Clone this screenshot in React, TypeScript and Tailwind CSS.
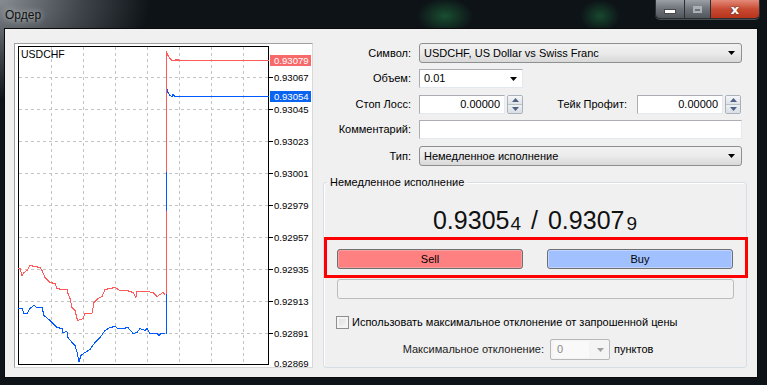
import React from "react";

const redPts: [number, number][] = [
  [18, 268], [20, 268], [22, 275], [24, 272], [27, 270], [30, 265], [35, 266], [40, 267], [42, 270], [45, 277], [50, 282], [55, 283], [57, 288], [62, 289], [67, 289], [68, 293], [70, 298], [72, 307], [75, 310], [77, 318], [78, 320], [83, 318], [85, 313], [92, 313], [94, 302], [98, 298], [102, 296], [105, 289], [110, 288], [115, 287], [120, 290], [127, 290], [133, 292], [136, 297], [137, 291], [147, 291], [153, 292], [157, 296], [160, 294], [163, 292], [165, 294],
];
const bluePts: [number, number][] = [
  [18, 308], [22, 308], [24, 313], [27, 313], [30, 308], [34, 305], [37, 307], [42, 307], [44, 315], [50, 320], [53, 323], [57, 327], [62, 328], [63, 332], [67, 331], [68, 337], [72, 342], [75, 345], [77, 351], [79, 361], [81, 355], [85, 352], [90, 349], [95, 342], [100, 337], [105, 330], [110, 327], [115, 326], [118, 328], [123, 328], [128, 327], [133, 333], [137, 332], [140, 328], [145, 330], [147, 328], [150, 333], [157, 333], [159, 335], [161, 333], [165, 333],
];

const pts = (p: [number, number][]) => p.map(([x, y]) => `${x},${y + 0.5}`).join(" ");

const axis: [string, number][] = [
  ["0.93067", 77], ["0.93045", 109], ["0.93023", 141], ["0.93001", 173], ["0.92979", 205], ["0.92957", 237], ["0.92935", 269], ["0.92913", 301], ["0.92891", 333], ["0.92869", 363],
];

function Chart() {
  const hs = [77, 109, 141, 173, 205, 237, 269, 301, 333];
  const vs = [51, 83, 115, 147, 179, 211, 243];
  const RED = "#ff5a5a";
  const BLUE = "#0058ff";
  const ff = "'Liberation Sans', Arial, sans-serif";
  return (
    <svg width={297} height={323} viewBox="15 44 297 323" shapeRendering="crispEdges">
      <rect x={15} y={44} width={297} height={323} fill="#ffffff" />
      {hs.map((y) => (
        <line key={"h" + y} x1={19} x2={269} y1={y + 0.5} y2={y + 0.5} stroke="#c4c4c4" strokeDasharray="3 3" />
      ))}
      {vs.map((x) => (
        <line key={"v" + x} x1={x + 0.5} x2={x + 0.5} y1={47} y2={365} stroke="#c4c4c4" strokeDasharray="3 3" />
      ))}
      <rect x={18.5} y={46.5} width={250} height={318} fill="none" stroke="#000" />
      {hs.map((y) => (
        <line key={"t" + y} x1={269} x2={273} y1={y + 0.5} y2={y + 0.5} stroke="#000" />
      ))}
      <polyline points={pts(bluePts)} fill="none" stroke={BLUE} />
      <polyline points={pts(redPts)} fill="none" stroke={RED} />
      <line x1={166.5} x2={166.5} y1={51} y2={295} stroke={RED} />
      <line x1={166.5} x2={166.5} y1={294} y2={334} stroke={BLUE} />
      <line x1={166.5} x2={166.5} y1={172} y2={211} stroke={BLUE} />
      <polyline points="166,51.5 168,55.5 170,58.5 172,60.5 175,60.5 176,59.5 177,60.5 178,59.5 179,60.5 269,60.5" fill="none" stroke={RED} />
      <polyline points="167,89.5 168,92.5 170,95.5 172,96.5 173,94.5 175,96.5 176,96.5 269,96.5" fill="none" stroke={BLUE} />
      <text x={21} y={58} fontSize={10.5} fontFamily={ff} fill="#000">USDCHF</text>
      {axis.map(([t, y]) => (
        <text key={t} x={274} y={y + 3.5} fontSize={9.6} fontFamily={ff} fill="#000">{t}</text>
      ))}
      <rect x={270} y={55} width={41} height={11} fill="#f86a6a" />
      <text x={274} y={63.5} fontSize={9.6} fontFamily={ff} fill="#fff">0.93079</text>
      <rect x={270} y={91} width={41} height={11} fill="#0a64f0" />
      <text x={274} y={99.5} fontSize={9.6} fontFamily={ff} fill="#fff">0.93054</text>
    </svg>
  );
}

function Arrow({ color = "#000" }: { color?: string }) {
  return (
    <svg width="8" height="4" viewBox="0 0 8 4">
      <polygon points="0,0 7,0 3.5,4" fill={color} />
    </svg>
  );
}

function Spinner() {
  return (
    <div className="flex flex-col w-[16px] h-[19px] ml-[2px] border border-[#a9b1bb] rounded-[2px] overflow-hidden">
      <div className="flex-1 flex items-center justify-center bg-gradient-to-b from-[#f4f6f8] to-[#dfe3e8] border-b border-[#b8c0c8]">
        <svg width="7" height="4" viewBox="0 0 7 4"><polygon points="0,4 7,4 3.5,0" fill="#4d6185" /></svg>
      </div>
      <div className="flex-1 flex items-center justify-center bg-gradient-to-b from-[#eef1f4] to-[#d9dee4]">
        <svg width="7" height="4" viewBox="0 0 7 4"><polygon points="0,0 7,0 3.5,4" fill="#4d6185" /></svg>
      </div>
    </div>
  );
}

function Label({ children }: { children: React.ReactNode }) {
  return <div className="w-[96px] pr-[8px] text-right shrink-0">{children}</div>;
}

export default function App() {
  return (
    <div
      className="w-[767px] h-[385px] overflow-hidden relative flex flex-col text-[11px] text-black bg-[radial-gradient(ellipse_150px_100px_at_0%_0%,#868c91_0%,#3e4449_55%,#0d1317_100%)]"
      style={{ fontFamily: "'Liberation Sans', Arial, sans-serif" }}
    >
      {/* title bar */}
      <div className="h-[29px] flex justify-between shrink-0 bg-[radial-gradient(ellipse_28px_18px_at_445px_16px,rgba(40,150,80,0.45),transparent),radial-gradient(ellipse_20px_16px_at_600px_16px,rgba(40,150,80,0.4),transparent)]">
        <div className="pl-[5px] pt-[6px] text-[12px] text-[#111] [text-shadow:0_0_6px_rgba(255,255,255,0.8)]">Ордер</div>
        <div className="flex h-[19px] mr-[7px] border border-t-0 border-[#2b2f33] rounded-b-[5px] overflow-hidden shadow-[0_1px_0_rgba(255,255,255,0.25)]">
          <div className="w-[29px] flex items-center justify-center bg-gradient-to-b from-[#9aa0a5] via-[#6d7378] to-[#50565b] border-r border-[#2b2f33]">
            <div className="w-[10px] h-[3px] bg-white mt-[4px] border border-[#4a4a4a] box-content" />
          </div>
          <div className="w-[26px] flex items-center justify-center bg-gradient-to-b from-[#9aa0a5] via-[#6d7378] to-[#50565b] border-r border-[#2b2f33]">
            <div className="w-[9px] h-[7px] border-2 border-[#aab0b4] border-t-[3px]" />
          </div>
          <div className="w-[48px] flex items-center justify-center bg-gradient-to-b from-[#e28a78] via-[#c84a32] to-[#b8331c]">
            <span className="text-white font-bold text-[13px] leading-none [text-shadow:0_0_2px_#333]" style={{ fontFamily: "'DejaVu Sans', sans-serif" }}>x</span>
          </div>
        </div>
      </div>

      {/* client */}
      <div className="ml-[5px] w-[752px] h-[348px] bg-[#f0f0f0] flex pl-[9px] pt-[14px] outline outline-1 outline-[#0a0a0a]">
        {/* chart panel */}
        <div className="w-[299px] h-[325px] border border-[#a0a0a0] border-r-[#d8d8d8] border-b-[#d8d8d8] bg-white">
          <Chart />
        </div>

        {/* right column */}
        <div className="ml-[10px] w-[424px] flex flex-col">
          <div className="flex items-center h-[20px]">
            <Label>Символ:</Label>
            <div className="w-[323px] h-[20px] flex items-center justify-between pl-[4px] pr-[5px] border border-[#8e8f8f] rounded-[3px] bg-gradient-to-b from-[#f2f2f2] via-[#ebebeb] to-[#d8d8d8]">
              <span>USDCHF, US Dollar vs Swiss Franc</span>
              <Arrow />
            </div>
          </div>
          <div className="flex items-center h-[19px] mt-[6px]">
            <Label>Объем:</Label>
            <div className="w-[104px] h-[19px] flex items-center justify-between pl-[4px] pr-[4px] border border-[#abadb3] border-b-[#e3e9ef] border-r-[#e3e9ef] bg-white">
              <span>0.01</span>
              <Arrow />
            </div>
          </div>
          <div className="flex items-center h-[19px] mt-[7px]">
            <Label>Стоп Лосс:</Label>
            <div className="w-[86px] h-[19px] flex items-center justify-end pr-[4px] border border-[#abadb3] border-b-[#e3e9ef] border-r-[#e3e9ef] bg-white">0.00000</div>
            <Spinner />
            <div className="w-[114px] text-right pr-[10px] shrink-0">Тейк Профит:</div>
            <div className="w-[86px] h-[19px] flex items-center justify-end pr-[4px] border border-[#abadb3] border-b-[#e3e9ef] border-r-[#e3e9ef] bg-white">0.00000</div>
            <Spinner />
          </div>
          <div className="flex items-center h-[19px] mt-[6px]">
            <Label>Комментарий:</Label>
            <div className="w-[323px] h-[19px] border border-[#abadb3] border-b-[#e3e9ef] border-r-[#e3e9ef] bg-white" />
          </div>
          <div className="flex items-center h-[20px] mt-[7px]">
            <Label>Тип:</Label>
            <div className="w-[323px] h-[20px] flex items-center justify-between pl-[4px] pr-[5px] border border-[#8e8f8f] rounded-[3px] bg-gradient-to-b from-[#f2f2f2] via-[#ebebeb] to-[#d8d8d8]">
              <span>Немедленное исполнение</span>
              <Arrow />
            </div>
          </div>

          {/* group box */}
          <div className="relative mt-[16px] w-[424px] h-[186px] border border-[#d5dfe5] rounded-[3px] shadow-[inset_1px_1px_0_#ffffff] flex flex-col">
            <div className="absolute left-[3px] -top-[7px] px-[3px] bg-[#f0f0f0] leading-[13px]">Немедленное исполнение</div>
            <div className="mt-[20px] h-[30px] flex items-end justify-center text-[25px] leading-none text-[#111]">
              <span>0.9305</span>
              <span className="text-[19px] ml-[1px]">4</span>
              <span className="mx-[10px]">/</span>
              <span>0.9307</span>
              <span className="text-[19px] ml-[2px]">9</span>
            </div>
            <div className="mt-[4px] w-[424px] h-[41px] border-[3px] border-[#ff0000] flex pl-[10px] pt-[9px]">
              <div className="w-[186px] h-[20px] flex items-center justify-center border border-[#707070] rounded-[3px] bg-[#ff8080] shadow-[inset_0_0_0_1px_#f4a0a0]">Sell</div>
              <div className="ml-[24px] w-[186px] h-[20px] flex items-center justify-center border border-[#707070] rounded-[3px] bg-[#a0c0ff] shadow-[inset_0_0_0_1px_#c0d4ff]">Buy</div>
            </div>
            <div className="ml-[13px] mt-[1px] w-[397px] h-[20px] border border-[#bcbcbc] rounded-[3px] bg-[#f2f2f2]" />
            <div className="ml-[12px] mt-[17px] flex items-center h-[13px]">
              <div className="w-[13px] h-[13px] border border-[#8e8f8f] bg-gradient-to-br from-[#dcdcdc] to-[#f6f6f6] shadow-[inset_0_0_0_2px_#f4f4f4]" />
              <span className="ml-[3px]">Использовать максимальное отклонение от запрошенной цены</span>
            </div>
            <div className="mt-[10px] flex items-center h-[21px]">
              <div className="w-[226px] text-right pr-[6px] text-[#222]">Максимальное отклонение:</div>
              <div className="w-[60px] h-[21px] flex items-center border border-[#b8b8b8] rounded-[2px] bg-[#f4f4f4] pl-[2px] pr-[4px]">
                <div className="w-[36px] h-[17px] bg-[#f9f9f9] text-[#8a8a8a] pl-[4px] flex items-center">0</div>
                <div className="flex-1 flex justify-end"><Arrow color="#a0a0a0" /></div>
              </div>
              <span className="ml-[4px]">пунктов</span>
            </div>
          </div>
        </div>
      </div>
    </div>
  );
}
